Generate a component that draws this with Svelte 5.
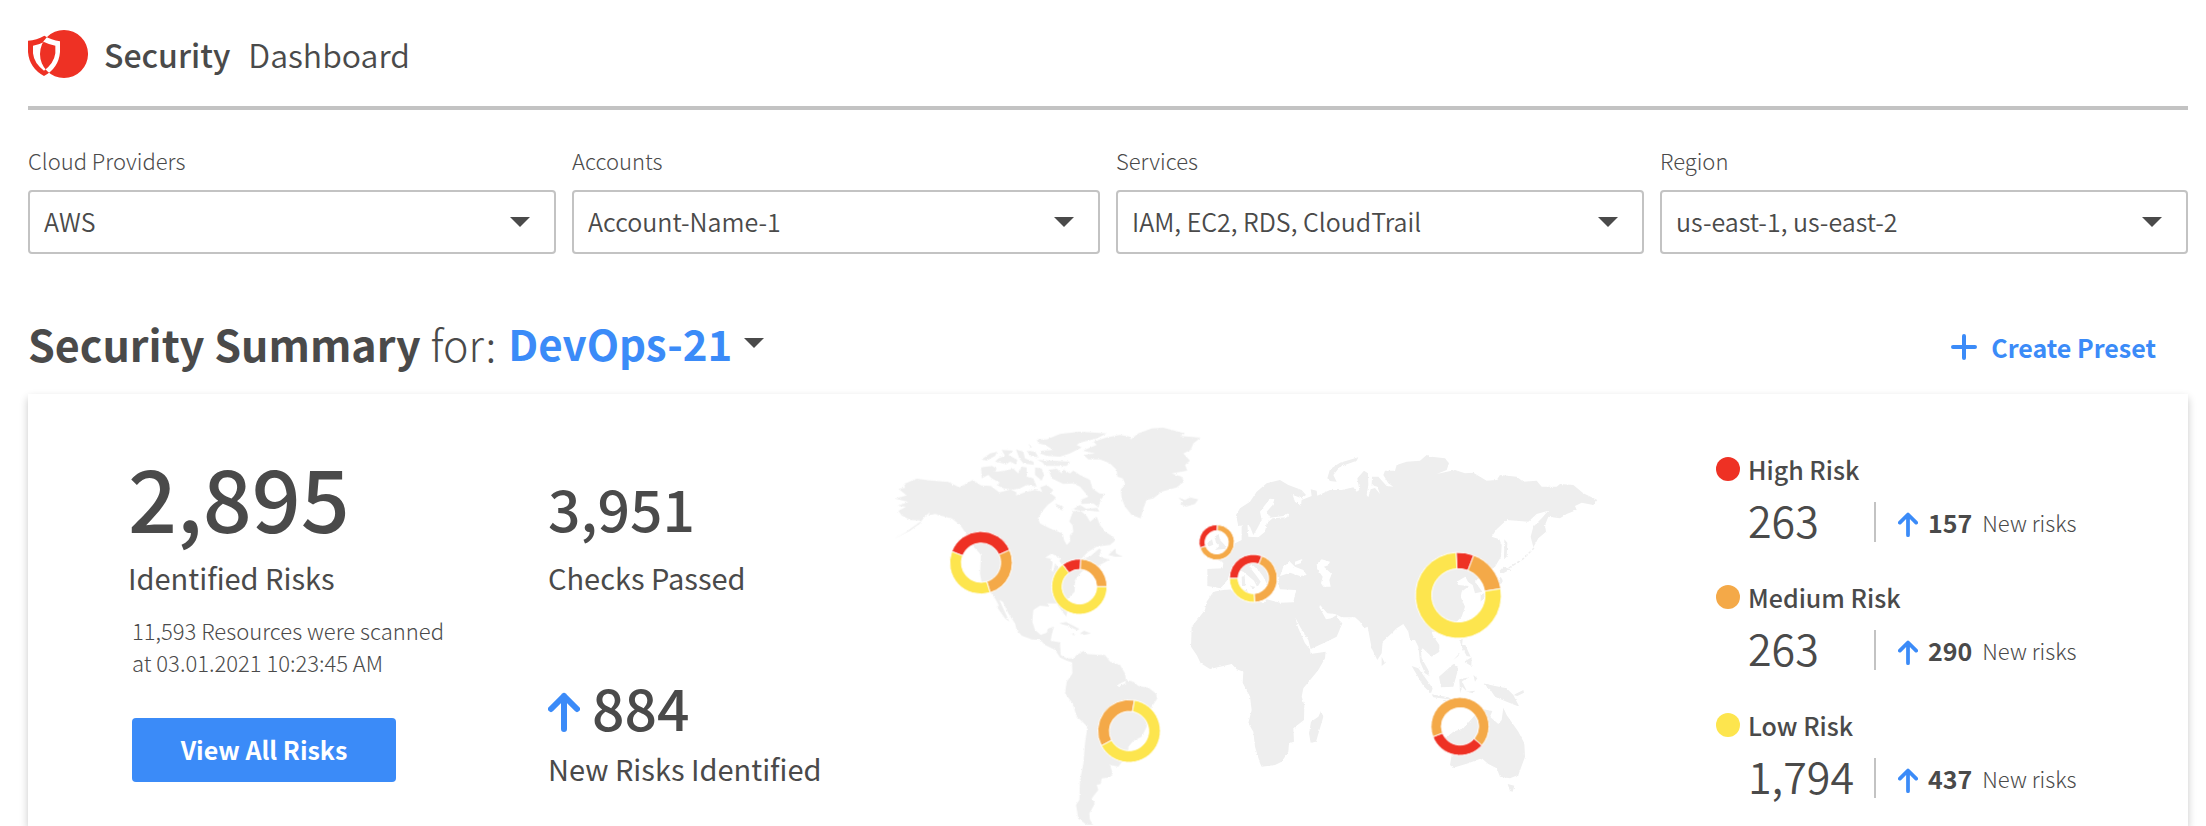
<script>
  const filters = [
    { id: 'providers', label: 'Cloud Providers', value: 'AWS' },
    { id: 'accounts', label: 'Accounts', value: 'Account-Name-1' },
    { id: 'services', label: 'Services', value: 'IAM, EC2, RDS, CloudTrail' },
    { id: 'region', label: 'Region', value: 'us-east-1, us-east-2' }
  ];

  const risks = [
    { level: 'high', title: 'High Risk', total: '263', fresh: '157' },
    { level: 'medium', title: 'Medium Risk', total: '263', fresh: '290' },
    { level: 'low', title: 'Low Risk', total: '1,794', fresh: '437' }
  ];

  // Each slice is [level, start, end] in degrees, clockwise from twelve o'clock.
  const donuts = [
    { x: 303, y: 458, outer: 94, inner: 59, slices: [['high', -69, 66], ['medium', 66, 163], ['low', 163, 291]] },
    { x: 598, y: 530, outer: 83, inner: 52, slices: [['high', -37, 3], ['medium', 3, 90], ['low', 90, 323]] },
    { x: 1010, y: 397, outer: 53, inner: 35, slices: [['medium', 2, 252], ['high', 252, 362]] },
    { x: 1120, y: 505, outer: 72, inner: 46, slices: [['high', -90, 21], ['medium', 21, 177], ['low', 177, 270]] },
    { x: 747, y: 963, outer: 94, inner: 59, slices: [['medium', -118, 10], ['low', 10, 242]] },
    { x: 1735, y: 556, outer: 129, inner: 80, slices: [['high', -3, 21], ['medium', 21, 81], ['low', 81, 357]] },
    { x: 1740, y: 949, outer: 87, inner: 56, slices: [['high', 131, 249], ['medium', -111, 131]] }
  ];

  function point(d, radius, deg) {
    const a = (deg * Math.PI) / 180;
    return `${(d.x + radius * Math.sin(a)).toFixed(1)} ${(d.y - radius * Math.cos(a)).toFixed(1)}`;
  }

  function slicePath(d, from, to) {
    const large = to - from > 180 ? 1 : 0;
    return `M${point(d, d.outer, from)} A${d.outer} ${d.outer} 0 ${large} 1 ${point(d, d.outer, to)} L${point(d, d.inner, to)} A${d.inner} ${d.inner} 0 ${large} 0 ${point(d, d.inner, from)}Z`;
  }
</script>

{#snippet caret()}
  <svg class="caret" viewBox="0 0 20 10" aria-hidden="true"><path d="M0 0H20L10 10Z" /></svg>
{/snippet}

{#snippet arrow()}
  <svg class="arrow" viewBox="0 0 32 40" aria-hidden="true"><path d="M16 37V4M3 17L16 4L29 17" /></svg>
{/snippet}

<div class="page">
  <header>
    <svg class="logo" viewBox="24 24 180 144" aria-hidden="true">
      <path
        fill-rule="evenodd"
        d="M132 24A72 72 0 1 1 132 168A72 72 0 1 1 132 24Z
           M73 41Q50 54 24 56V90Q28 138 72 162Q116 138 120 90V58Q94 54 73 41Z
           M72 60Q56 69 39 71V94Q42 124 72 146Q102 124 106 94V71Q88 68 72 60Z"
      />
    </svg>
    <h1><strong>Security</strong><span>Dashboard</span></h1>
  </header>

  <form class="filters">
    {#each filters as f}
      <div class="field">
        <label for={f.id}>{f.label}</label>
        <div class="box">
          <select id={f.id}><option>{f.value}</option></select>
          {@render caret()}
        </div>
      </div>
    {/each}
  </form>

  <div class="heading">
    <h2>Security Summary <span>for:</span></h2>
    <div class="preset">
      <select aria-label="Preset"><option>DevOps-21</option></select>
      {@render caret()}
    </div>
    <button class="create">
      <svg viewBox="0 0 26 26" aria-hidden="true"><path d="M13 2V24M2 13H24" /></svg>
      Create Preset
    </button>
  </div>

  <main class="card">
    <section class="identified">
      <div class="huge">2,895</div>
      <h3>Identified Risks</h3>
      <p>11,593 Resources were scanned<br />at 03.01.2021 10:23:45 AM</p>
      <button class="view">View All Risks</button>
    </section>

    <section class="checks">
      <div class="stat">
        <div class="big">3,951</div>
        <h3>Checks Passed</h3>
      </div>
      <div class="stat tight">
        <div class="big">{@render arrow()}884</div>
        <h3>New Risks Identified</h3>
      </div>
    </section>

    <section class="map">
      <svg viewBox="0 0 2220 1248" role="img" aria-label="Risks by region">
        <defs>
          <filter id="coast" x="0" y="0" width="100%" height="100%">
            <feTurbulence type="fractalNoise" baseFrequency="0.14" numOctaves="2" seed="4" />
            <feDisplacementMap in="SourceGraphic" scale="7" xChannelSelector="R" yChannelSelector="G" />
          </filter>
        </defs>
        <g filter="url(#coast)">
          <path
            class="land"
            d="M38 389L75 368L100 350L125 332L90 330L65 316L55 303L78 290L52 288L85 276L45 266L80 256L55 236L75 234L72 222L110 206L150 211L205 216L238 232L278 210L303 226L332 228L358 247L392 238L410 247L408 256L440 245L465 240L487 246L480 232L500 225L520 240L512 250L528 262L520 272L505 283L490 300L474 325L480 340L510 355L548 370L552 390L560 405L570 395L570 375L580 365L577 345L568 335L575 315L580 303L605 305L620 318L630 335L650 320L660 345L675 365L700 380L705 392L690 405L650 410L625 425L600 450L632 438L658 415L664 422L656 438L675 445L690 448L650 470L632 462L605 485L585 510L584 545L560 570L552 590L562 606L558 620L545 602L530 580L500 580L510 590L480 587L460 600L457 635L465 660L482 675L500 668L505 655L522 650L515 675L512 692L540 697L542 735L560 745L580 745L590 735L612 722L618 732L660 735L675 735L690 755L720 765L735 790L738 810L760 815L775 828L805 833L828 850L832 865L815 890L805 915L800 950L785 980L760 993L745 1010L745 1020L730 1050L715 1070L690 1065L698 1090L690 1102L665 1105L662 1122L650 1125L655 1140L635 1165L645 1180L628 1210L630 1230L640 1245L620 1245L595 1225L588 1185L598 1170L600 1110L610 1060L615 1000L622 950L610 938L590 920L578 880L555 850L560 815L577 790L576 757L560 752L540 742L525 720L495 705L480 690L455 688L425 677L410 660L405 640L385 610L368 575L358 570L388 635L375 625L350 590L357 588L345 565L330 545L305 518L300 490L303 435L290 420L270 400L258 370L240 345L215 325L185 318L165 312L145 318L150 306L132 322L120 340L90 362Z
               M303 172L335 168L350 175L345 185L370 183L400 176L415 190L425 170L440 172L440 200L460 205L470 230L440 225L420 235L400 239L370 235L350 225L360 218L335 205L325 195L305 205Z
               M305 148L330 130L352 125L345 138L320 152Z
               M345 155L355 145L375 138L365 120L400 122L385 135L412 150L408 163L390 155L378 163L360 158Z
               M408 118L430 125L435 145L460 155L462 165L430 160L418 145Z
               M440 122L465 125L476 142L450 138ZM446 100L456 112L450 112Z
               M470 88L500 88L540 72L600 65L680 70L650 85L600 98L590 105L605 112L570 130L540 140L500 138L480 130L485 122L520 120L495 105L475 100Z
               M472 150L520 152L570 155L560 168L495 168L488 158Z
               M465 172L485 175L492 195L485 212L465 195Z
               M506 180L530 176L545 190L550 178L570 190L580 182L600 195L630 210L638 236L658 250L675 252L662 270L655 292L640 280L605 282L602 270L625 260L600 230L580 220L550 222L515 205Z
               M525 280L550 290L548 302L535 295ZM578 298L600 285L618 296L652 294L658 305L630 302L605 303Z
               M608 122L650 105L640 95L680 82L720 75L750 80L752 88L775 70L815 55L850 53L915 70L900 78L962 83L940 100L932 120L910 130L930 152L915 165L922 182L875 190L905 200L912 215L890 232L845 245L820 265L800 270L790 295L782 325L755 315L735 290L725 265L722 240L735 220L728 205L712 200L710 180L690 160L660 148L625 148L610 135L645 130Z
               M895 262L915 270L930 262L955 268L945 282L918 290L900 282L908 276Z
               M685 435L706 415L708 430L728 440L705 440Z
               M537 640L558 636L598 657L592 661L565 648ZM600 670L612 662L633 670L612 675ZM572 671L584 672L580 676Z"
          />
          <path class="sea" d="M495 443L515 430L542 446L538 455L552 465L540 480L525 460L520 485L514 482L518 458L510 445Z" />
          <path class="sea" d="M708 827L735 813L740 818L716 830Z" />
          <g transform="translate(1080 0)">
            <path
              class="land"
              d="M-98 477L-52 475L-50 458L-80 444L-45 428L-15 400L5 390L5 350L22 340L25 380L55 382L75 365L80 340L98 325L142 322L145 310L130 318L90 323L80 305L98 285L103 268L90 266L75 285L60 305L65 330L52 355L40 375L30 350L20 345L-5 348L-12 315L0 295L30 275L50 245L80 220L120 210L145 225L185 240L198 255L185 265L158 255L165 275L182 287L185 270L215 258L212 238L230 242L232 257L270 240L305 240L340 232L350 245L358 240L352 205L372 182L384 190L385 225L380 255L385 262L392 238L405 234L420 252L412 230L395 225L396 200L415 200L440 228L460 230L445 220L430 195L435 182L465 182L470 165L500 155L540 152L560 135L575 140L615 145L627 160L620 180L590 192L645 180L675 190L700 188L740 212L770 210L780 195L830 200L850 215L890 212L905 230L950 230L960 222L1000 225L1030 250L1072 270L1060 285L1025 278L1005 288L1010 300L980 312L960 325L925 320L915 345L918 365L895 385L880 412L872 380L880 350L905 325L925 302L890 312L865 335L800 330L770 358L755 380L778 388L785 405L783 440L765 470L740 490L720 500L705 515L727 545L705 550L698 525L690 520L684 515L676 500L650 515L655 525L687 528L665 545L662 560L675 590L665 620L640 645L605 665L575 665L578 676L598 705L598 725L575 740L548 715L543 722L545 745L565 780L568 798L555 790L540 755L535 710L525 690L510 690L505 665L490 642L470 655L455 670L428 695L425 730L412 750L395 715L383 650L372 655L360 635L345 622L305 622L285 612L262 610L240 585L238 592L258 628L275 625L290 615L295 628L307 640L290 680L250 700L212 717L205 690L180 650L150 592L165 620L175 655L195 700L210 718L212 732L257 725L255 745L235 780L190 835L185 860L193 885L192 930L160 955L162 995L147 1000L145 1025L125 1055L105 1065L65 1070L60 1060L45 1010L40 965L25 940L35 900L30 860L8 818L10 785L-10 778L-25 762L-60 770L-90 777L-118 760L-130 735L-147 710L-145 650L-105 600L-100 575L-80 545L-50 540L-20 538L20 540L35 560L70 580L80 568L120 578L160 577L168 540L120 538L112 515L118 502L96 500L98 520L85 530L70 500L55 480L35 463L28 470L50 498L62 515L52 532L42 512L10 485L-5 480L-30 490L-38 510L-58 535L-98 528Z
                 M262 205L270 178L300 158L355 142L350 152L300 170L280 195L290 215L270 213Z
                 M-76 380L-64 372L-60 390L-46 405L-42 416L-75 420L-62 408L-72 398ZM-98 400L-84 388L-80 404L-95 410Z
                 M5 500L14 498L16 528L6 528ZM30 528L45 530L42 538Z
                 M243 903L250 920L228 995L212 998L207 970L213 935L235 920Z
                 M425 740L435 760L425 768Z
                 M515 768L535 775L578 835L573 850L550 828Z
                 M575 853L625 862L640 870L580 862Z
                 M597 800L640 762L655 775L640 830L603 832Z
                 M658 808L688 802L666 814L682 846L666 830L660 850Z
                 M728 820L765 828L800 835L820 855L838 890L800 875L765 860L750 838Z
                 M820 855L850 840L852 848L832 858ZM700 795L712 805L705 815ZM680 845L705 842L700 850Z
                 M662 705L676 705L692 740L680 738ZM672 755L695 742L694 768ZM640 750L660 728L655 738Z
                 M658 690L668 687L666 710Z
                 M793 388L802 398L800 440L792 448Z
                 M776 485L790 470L812 478L790 490ZM782 500L789 512L772 540L735 560L722 575L722 555L760 535Z
                 M610 990L640 965L670 955L705 915L730 898L757 903L750 920L775 942L785 930L790 893L800 915L835 965L853 1000L855 1040L835 1095L810 1105L780 1100L770 1075L745 1062L725 1045L685 1060L640 1073L630 1065L635 1035L620 1010Z
                 M803 1122L823 1127L818 1145L810 1143Z"
            />
            <path class="isles" d="M806 474L850 446L882 414M610 872L665 868" />
            <path
              class="sea"
              d="M120 498L130 470L150 455L165 470L190 480L200 495L180 498L150 488ZM165 455L187 447L182 460L165 465ZM230 462L245 448L270 455L265 466L252 470L275 492L268 510L272 530L250 530L243 520L248 500L232 478Z"
            />
          </g>
        </g>
        {#each donuts as d}
          {#each d.slices as [level, from, to]}
            <path class="slice {level}" d={slicePath(d, from, to)} />
          {/each}
        {/each}
      </svg>
    </section>

    <section class="levels">
      {#each risks as r}
        <div class="risk">
          <h4><i class="dot {r.level}"></i>{r.title}</h4>
          <div class="row">
            <span class="total">{r.total}</span>
            <span class="fresh">{@render arrow()}<b>{r.fresh}</b>New risks</span>
          </div>
        </div>
      {/each}
    </section>
  </main>
</div>

<style>
  :global(body) {
    background: #fff;
  }
  .page {
    --ink: #4a4a4a;
    --blue: #3b8bf8;
    --line: #c3c3c3;
    box-sizing: border-box;
    min-height: 100vh;
    padding: 0 18px 0 28px;
    display: flex;
    flex-direction: column;
    font-family: 'Noto Sans CJK SC', 'Noto Sans', sans-serif;
    font-weight: 350;
    color: var(--ink);
  }
  h1, h2, h3, h4, p {
    margin: 0;
    font-weight: inherit;
  }
  select, button {
    appearance: none;
    font: inherit;
    color: inherit;
    background: none;
    border: 0;
    margin: 0;
    padding: 0;
  }
  header {
    display: flex;
    align-items: center;
    gap: 16px;
    padding: 30px 0 28px;
    border-bottom: 4px solid var(--line);
  }
  .logo {
    width: 60px;
    height: 48px;
    fill: #ee3124;
  }
  h1 {
    display: flex;
    gap: 18px;
    font-size: 32px;
    line-height: 48px;
  }
  h1 strong {
    font-weight: 500;
  }
  .filters {
    display: grid;
    grid-template-columns: repeat(4, 1fr);
    gap: 16px;
    padding-top: 34px;
  }
  .field {
    display: flex;
    flex-direction: column;
    gap: 14px;
  }
  label {
    font-size: 22px;
    font-weight: 300;
    line-height: 32px;
  }
  .box, .preset {
    display: grid;
    align-items: center;
  }
  .box > :global(*), .preset > :global(*) {
    grid-area: 1 / 1;
  }
  .box select {
    box-sizing: border-box;
    width: 100%;
    height: 64px;
    padding: 0 56px 2px 14px;
    border: 2px solid var(--line);
    border-radius: 4px;
    font-size: 25px;
  }
  .caret {
    width: 20px;
    height: 10px;
    justify-self: end;
    fill: var(--ink);
    pointer-events: none;
  }
  .box .caret {
    margin-right: 26px;
  }
  .heading {
    display: flex;
    padding: 59px 0 21px;
    line-height: 60px;
  }
  h2 {
    font-size: 43px;
    font-weight: 700;
  }
  h2 span {
    font-weight: 300;
  }
  .preset {
    margin-left: 12px;
  }
  .preset select {
    height: 60px;
    padding-right: 32px;
    font-size: 42px;
    font-weight: 700;
    line-height: 60px;
    color: var(--blue);
  }
  .create {
    display: flex;
    align-items: center;
    gap: 14px;
    margin-left: auto;
    padding: 8px 32px 0 0;
    font-size: 25px;
    font-weight: 700;
    line-height: 50px;
    color: var(--blue);
  }
  .create svg {
    width: 26px;
    height: 26px;
    fill: none;
    stroke: currentColor;
    stroke-width: 4;
    stroke-linecap: round;
  }
  .card {
    flex: 1;
    display: grid;
    grid-template-columns: 518fr 334fr 740fr 568fr;
    box-shadow: 0 4px 8px rgba(0, 0, 0, 0.22);
  }
  .identified {
    padding: 52px 0 0 100px;
  }
  .huge {
    font-size: 86px;
    font-weight: 500;
    line-height: 100px;
  }
  h3 {
    font-size: 29px;
    font-weight: 400;
    line-height: 40px;
  }
  .identified h3 {
    margin-top: 11px;
  }
  p {
    margin: 17px 0 0 4px;
    font-size: 22px;
    font-weight: 300;
    line-height: 32px;
  }
  .view {
    width: 264px;
    height: 64px;
    margin: 40px 0 0 4px;
    padding-bottom: 2px;
    border-radius: 4px;
    background: var(--blue);
    color: #fff;
    font-size: 25px;
    font-weight: 700;
  }
  .checks {
    display: flex;
    flex-direction: column;
    gap: 69px;
    padding: 73px 0 0 2px;
  }
  .stat {
    display: grid;
    gap: 10px;
  }
  .stat.tight {
    gap: 2px;
  }
  .big {
    display: flex;
    align-items: center;
    gap: 12px;
    font-size: 57px;
    font-weight: 500;
    line-height: 80px;
  }
  .arrow {
    width: 32px;
    height: 40px;
    margin-top: 12px;
    fill: none;
    stroke: var(--blue);
    stroke-width: 6;
    stroke-linecap: round;
    stroke-linejoin: round;
  }
  .map {
    padding-top: 16px;
  }
  .map svg {
    display: block;
    width: 100%;
  }
  .land {
    fill: #eee;
  }
  .sea {
    fill: #fff;
  }
  .isles {
    fill: none;
    stroke: #eee;
    stroke-width: 4;
    stroke-dasharray: 10 5;
  }
  .slice {
    stroke: #fff;
    stroke-width: 3;
  }
  .slice.high {
    fill: #ee3124;
  }
  .slice.medium {
    fill: #f4a948;
  }
  .slice.low {
    fill: #fde54e;
  }
  .dot.high {
    background: #ee3124;
  }
  .dot.medium {
    background: #f4a948;
  }
  .dot.low {
    background: #fde54e;
  }
  .levels {
    display: flex;
    flex-direction: column;
    gap: 27px;
    padding: 55px 0 0 96px;
  }
  .risk {
    display: grid;
    gap: 5px;
  }
  h4 {
    display: flex;
    align-items: center;
    gap: 8px;
    font-size: 25px;
    font-weight: 500;
    line-height: 40px;
  }
  .dot {
    width: 24px;
    height: 24px;
    border-radius: 50%;
  }
  .row {
    display: flex;
    align-items: center;
    height: 56px;
    padding-left: 32px;
  }
  .total {
    min-width: 126px;
    padding-bottom: 6px;
    font-size: 43px;
    line-height: 50px;
  }
  .fresh {
    display: flex;
    align-items: center;
    gap: 10px;
    height: 40px;
    padding-left: 22px;
    border-left: 2px solid var(--line);
    font-size: 22px;
    font-weight: 300;
  }
  .fresh b {
    font-size: 25px;
    font-weight: 700;
  }
  .fresh .arrow {
    width: 20px;
    height: 25px;
    margin-top: 4px;
  }
</style>
